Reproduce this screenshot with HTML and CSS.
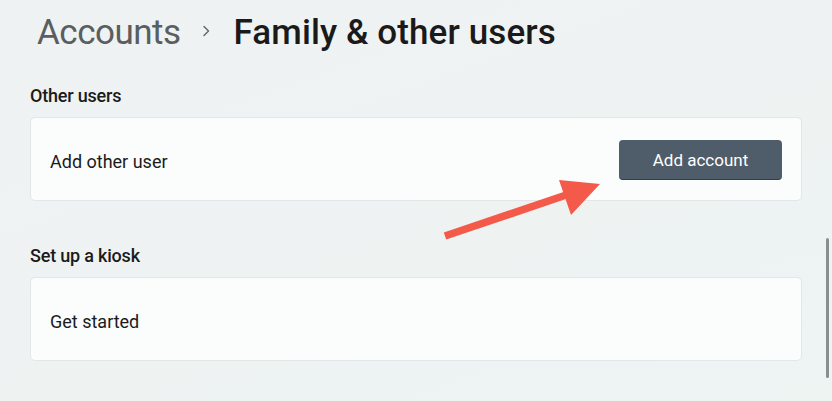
FILE: index.html
```html
<!DOCTYPE html>
<html lang="en">
<head>
<meta charset="utf-8">
<title>Family &amp; other users</title>
<link rel="stylesheet" href="styles.css">
</head>
<body>
<main class="page">
  <header class="breadcrumb">
    <span class="crumb-parent">Accounts</span>
    <svg class="crumb-sep" width="10" height="12" viewBox="0 0 10 12" aria-hidden="true"><path d="M3 1.5 L7.5 6 L3 10.5" fill="none" stroke="#5f6566" stroke-width="1.4" stroke-linecap="round" stroke-linejoin="round"/></svg>
    <h1 class="crumb-current">Family &amp; other users</h1>
  </header>

  <section class="group">
    <h2 class="group-title">Other users</h2>
    <div class="card">
      <span class="card-label">Add other user</span>
      <button class="btn-primary" type="button">Add account</button>
    </div>
  </section>

  <section class="group group-kiosk">
    <h2 class="group-title">Set up a kiosk</h2>
    <div class="card">
      <span class="card-label">Get started</span>
    </div>
  </section>
</main>

<svg class="annotation-arrow" width="832" height="401" viewBox="0 0 832 401" aria-hidden="true">
  <line x1="445" y1="236" x2="572" y2="193" stroke="#f45a4a" stroke-width="7.5"/>
  <polygon points="600,184 559,180 571,215" fill="#f45a4a"/>
</svg>
<div class="scrollbar"></div>
</body>
</html>
```

FILE: styles.css
```css
html, body {
  margin: 0;
  padding: 0;
}
body {
  width: 832px;
  height: 401px;
  overflow: hidden;
  background: linear-gradient(160deg, #eef2f3 0%, #eef3f2 60%, #edf4f2 100%);
  font-family: Roboto, "Noto Sans", sans-serif;
  color: #1b1b1b;
  position: relative;
}
.page {
  padding: 0 30px;
}
.breadcrumb {
  display: flex;
  align-items: baseline;
  padding-top: 11px;
  padding-left: 7px;
}
.crumb-parent {
  font-size: 35px;
  line-height: 44px;
  letter-spacing: -0.5px;
  color: #5a5e5f;
}
.crumb-sep {
  margin: 0 23px 0 20px;
  position: relative;
  top: -7px;
}
.crumb-current {
  margin: 0;
  font-size: 35px;
  line-height: 44px;
  font-weight: 500;
  letter-spacing: 0.1px;
  color: #1a1a1a;
}
.group {
  padding-top: 29px;
}
.group-kiosk {
  padding-top: 43px;
}
.group-title {
  margin: 0 0 9px;
  font-size: 18px;
  line-height: 24px;
  font-weight: 500;
  letter-spacing: -0.2px;
  color: #1b1b1b;
}
.card {
  display: flex;
  align-items: center;
  justify-content: space-between;
  height: 84px;
  box-sizing: border-box;
  padding: 4px 19px 0;
  background: #fbfcfc;
  border: 1px solid #e3e7e7;
  border-radius: 5px;
}
.card-label {
  font-size: 18px;
  color: #1b1b1b;
}
.btn-primary {
  width: 163px;
  height: 40px;
  margin-top: -2px;
  border: none;
  border-bottom: 1px solid #323d47;
  border-radius: 4px;
  background: #4f5d6a;
  color: #ffffff;
  font-family: inherit;
  font-size: 17px;
  padding: 1px 0 0;
}
.annotation-arrow {
  position: absolute;
  left: 0;
  top: 0;
  pointer-events: none;
}
.scrollbar {
  position: absolute;
  left: 826px;
  top: 238px;
  width: 3px;
  height: 140px;
  border-radius: 2px;
  background: #8b8e8f;
}
```
